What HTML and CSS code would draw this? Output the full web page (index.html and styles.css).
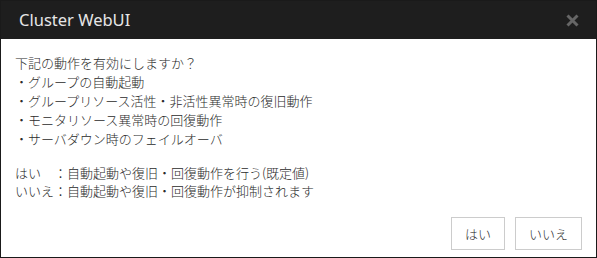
FILE: index.html
```html
<!DOCTYPE html>
<html lang="ja">
<head>
<meta charset="utf-8">
<link rel="stylesheet" href="styles.css">
</head>
<body>
<div class="dialog">
  <div class="header">
    <span class="title">Cluster WebUI</span>
    <svg class="close" width="13" height="13" viewBox="0 0 13 13" aria-label="閉じる">
      <path d="M1.5 1.5 L11.5 11.5 M11.5 1.5 L1.5 11.5" stroke="#666666" stroke-width="3" fill="none"/>
    </svg>
  </div>
  <div class="content">
    <div class="block">
      <div>下記の動作を有効にしますか？</div>
      <div>・グループの自動起動</div>
      <div>・グループリソース活性・非活性異常時の復旧動作</div>
      <div>・モニタリソース異常時の回復動作</div>
      <div>・サーバダウン時のフェイルオーバ</div>
    </div>
    <div class="block second">
      <div>はい　：自動起動や復旧・回復動作を行う(既定値)</div>
      <div>いいえ：自動起動や復旧・回復動作が抑制されます</div>
    </div>
  </div>
  <div class="footer">
    <button class="btn yes">はい</button>
    <button class="btn">いいえ</button>
  </div>
</div>
</body>
</html>
```
FILE: styles.css
```css
html, body {
  margin: 0;
  padding: 0;
  background: #ffffff;
}
.dialog {
  width: 597px;
  height: 258px;
  box-sizing: border-box;
  border: 1px solid #1a1a1a;
  display: flex;
  flex-direction: column;
  background: #ffffff;
  font-family: "Noto Sans CJK JP", "Noto Sans", sans-serif;
}
.header {
  height: 38px;
  background: #1e1e1e;
  display: flex;
  align-items: center;
  justify-content: space-between;
  padding: 0 17px 0 18px;
}
.title {
  color: #e6e6e6;
  font-family: "Noto Sans", "Noto Sans CJK JP", sans-serif;
  font-size: 16.5px;
  position: relative;
  top: -1px;
}
.close {
  display: block;
  position: relative;
  top: 0px;
}
.content {
  padding: 14px 14px 0 14px;
  color: #2b2b2b;
  font-size: 13px;
  font-weight: 300;
  line-height: 19px;
  flex: 1;
}
.second {
  margin-top: 16px;
  line-height: 18px;
}
.footer {
  display: flex;
  justify-content: flex-end;
  gap: 10px;
  padding: 0 14px 7px 0;
}
.btn {
  height: 33px;
  box-sizing: border-box;
  background: #ffffff;
  border: 1px solid #cccccc;
  border-radius: 0;
  color: #333333;
  font-family: "Noto Sans CJK JP", sans-serif;
  font-size: 13px;
  font-weight: 300;
  padding: 0 13px;
  min-width: 52px;
}
```
